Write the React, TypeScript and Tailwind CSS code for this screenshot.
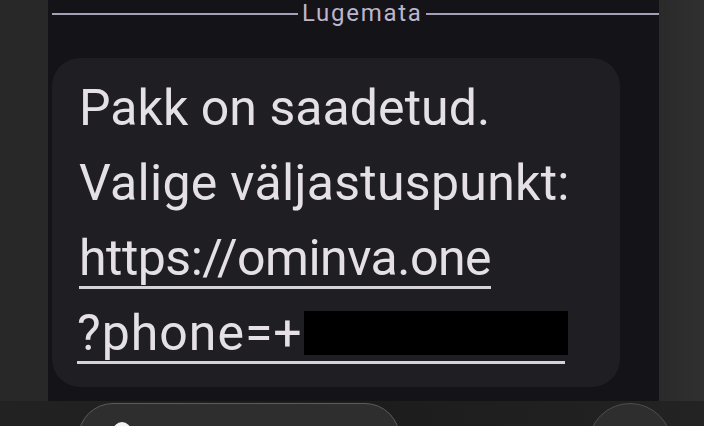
import React from "react";

export default function App() {
  const font = { fontFamily: "Roboto, 'Noto Sans', Arial, sans-serif" };
  return (
    <div
      className="w-[704px] h-[426px] overflow-hidden flex flex-col bg-[#202020]"
      style={font}
    >
      <div className="flex h-[401px] shrink-0">
        <div className="w-[48px] bg-[#282828]" />
        <div className="w-[611px] bg-[#141318] flex flex-col">
          <div className="flex items-center h-[28px]">
            <div className="ml-[4px] w-[246px] h-[2px] bg-[#a6a0b6]" />
            <div className="px-[4px] text-[24px] leading-[28px] text-[#bcb6cc] tracking-[1.7px] -mt-[2px]">
              Lugemata
            </div>
            <div className="flex-1 h-[2px] bg-[#a6a0b6]" />
          </div>
          <div className="ml-[4px] mt-[30px] w-[568px] h-[329px] rounded-[28px] bg-[#1f1e23] pl-[27px] pt-[13px] text-[50px] leading-[75px] text-[#e4e0e6]">
            <div className="h-[75px] whitespace-nowrap tracking-[0.05px]">Pakk on saadetud.</div>
            <div className="h-[75px] whitespace-nowrap tracking-[0.3px]">Valige väljastuspunkt:</div>
            <div className="h-[75px] whitespace-nowrap tracking-[-0.5px]">
              <span className="inline-block leading-[62px] bg-[linear-gradient(#d6d2da,#d6d2da)] bg-no-repeat bg-[length:100%_3px] bg-bottom">
                https://ominva.one
              </span>
            </div>
            <div className="h-[75px] whitespace-nowrap -ml-[2px] tracking-[1px]">
              <span className="inline-block leading-[62px] w-[488px] bg-[linear-gradient(#d6d2da,#d6d2da)] bg-no-repeat bg-[length:100%_3px] bg-bottom">
                ?phone=+
                <span className="inline-block w-[264px] h-[44px] bg-black align-[-5px] ml-[1px]" />
              </span>
            </div>
          </div>
        </div>
        <div className="flex-1 bg-[linear-gradient(90deg,#2a2a2a,#303030)]" />
      </div>
      <div className="flex flex-1 bg-[linear-gradient(90deg,#222222,#1c1c1c_50%,#232323)] pt-[2px]">
        <div className="ml-[78px] w-[322px] h-[70px] rounded-[40px] bg-[#2e2e2e] border border-[#5c5c5c] pl-[34px] pt-[18px]">
          <div className="w-[18px] h-[18px] rounded-full bg-[#f2f2f2]" />
        </div>
        <div className="ml-[188px] w-[84px] h-[84px] rounded-full bg-[#2e2e2e] border border-[#4e4e4e]" />
      </div>
    </div>
  );
}
